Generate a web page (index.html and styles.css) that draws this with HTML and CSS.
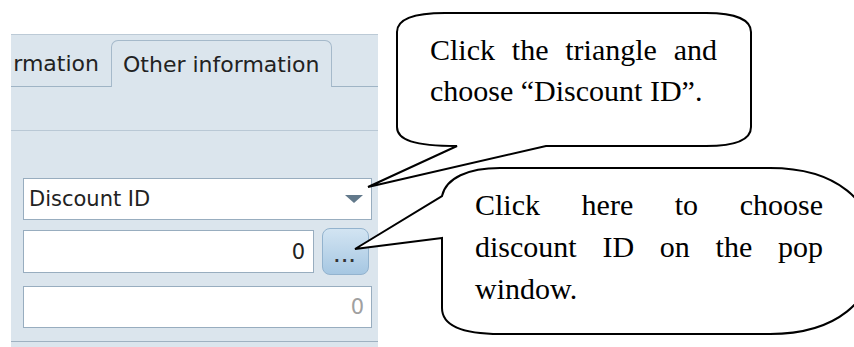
FILE: index.html
```html
<!DOCTYPE html>
<html>
<head>
	<title>Other information</title>
	<link rel="stylesheet" href="styles.css">
</head>
<body>
	<div class="panel">
		<div class="tabs">
			<div class="tab">rmation</div>
			<div class="tab active">Other information</div>
		</div>
		<div class="strip"></div>

		<div class="fields">
			<div class="field select">
				<span>Discount ID</span>
				<span class="arrow"></span>
			</div>
			<div class="row">
				<div class="field number">0</div>
				<button class="pick">...</button>
			</div>
			<div class="field number muted">0</div>
		</div>
	</div>

	<!-- callouts drawn over the form -->
	<svg class="callouts" width="854" height="347" viewBox="0 0 854 347">
		<path d="M 457 146 L 368 187 L 546 146 L 706 146 C 736 146 751 140 751 127 L 751 32 C 751 20 736 13 706 13 L 445 13 C 410 13 397 20 397 32 L 397 127 C 397 140 414 146 457 146 Z" />
		<path d="M 442 238 L 355 249 L 442 196 C 446 178 468 168 500 168 L 770 168 C 835 168 875 200 875 251 C 875 302 835 334 770 334 L 500 334 C 462 334 442 326 442 308 Z" />
	</svg>
	<div class="note note-one">Click the triangle and choose &ldquo;Discount ID&rdquo;.</div>
	<div class="note note-two">Click here to choose discount ID on the pop window.</div>
</body>
</html>
```

FILE: styles.css
```css
body {
	margin: 0;
	width: 854px;
	height: 347px;
	overflow: hidden;
	position: relative;
	background-color: #ffffff;
	font-family: "DejaVu Sans", sans-serif;
	font-size: 21px;
	color: #222222;
}

.panel {
	margin: 34px 0 0 11px;
	width: 367px;
	height: 312px;
	background-color: #dbe5ed;
	border-top: 1px solid #bccad6;
}

.tabs {
	display: flex;
	align-items: flex-end;
	height: 51px;
	border-bottom: 1px solid #9fb4c5;
}

.tab {
	width: 100px;
	height: 46px;
	padding-right: 12px;
	box-sizing: border-box;
	display: flex;
	align-items: center;
	justify-content: flex-end;
	white-space: nowrap;
	font-size: 22px;
}

.tab.active {
	width: 221px;
	height: 47px;
	margin-bottom: -1px;
	padding: 0 0 0 11px;
	justify-content: flex-start;
	border: 1px solid #a5b9ca;
	border-bottom: none;
	border-radius: 7px 7px 0 0;
	background-color: #dbe5ed;
}

.strip {
	height: 43px;
	border-bottom: 1px solid #b9c8d5;
}

.fields {
	padding: 47px 0 13px 12px;
	border-bottom: 1px solid #9fb1c1;
}

.field {
	height: 42px;
	box-sizing: border-box;
	background-color: #ffffff;
	border: 1px solid #98adbf;
	display: flex;
	align-items: center;
}

.select {
	width: 349px;
	padding: 0 8px 0 5px;
	justify-content: space-between;
}

.arrow {
	width: 0;
	height: 0;
	border-left: 9px solid transparent;
	border-right: 9px solid transparent;
	border-top: 8px solid #62798b;
}

.row {
	display: flex;
	align-items: center;
	gap: 8px;
	margin-top: 8px;
}

.number {
	width: 349px;
	height: 43px;
	padding-right: 8px;
	justify-content: flex-end;
}

.row .number {
	width: 291px;
}

.muted {
	margin-top: 11px;
	height: 42px;
	color: #a0a0a0;
	padding-right: 7px;
}

.pick {
	width: 47px;
	height: 47px;
	padding: 10px 0 0 0;
	border: 1px solid #93b3ce;
	border-radius: 8px;
	background: linear-gradient(#d2e4f2, #a6c7e2);
	font-family: "DejaVu Sans", sans-serif;
	font-size: 15px;
	font-weight: bold;
	letter-spacing: 2px;
	color: #333333;
}

.callouts {
	position: absolute;
	left: 0;
	top: 0;
}

.callouts path {
	fill: #ffffff;
	stroke: #000000;
	stroke-width: 2;
	stroke-linejoin: miter;
}

.note {
	position: absolute;
	font-family: "Liberation Serif", serif;
	font-size: 30px;
	line-height: 41px;
	text-align: justify;
	color: #000000;
}

.note-one {
	left: 430px;
	top: 29px;
	width: 287px;
}

.note-two {
	left: 475px;
	top: 184px;
	width: 348px;
	line-height: 42px;
}
```
